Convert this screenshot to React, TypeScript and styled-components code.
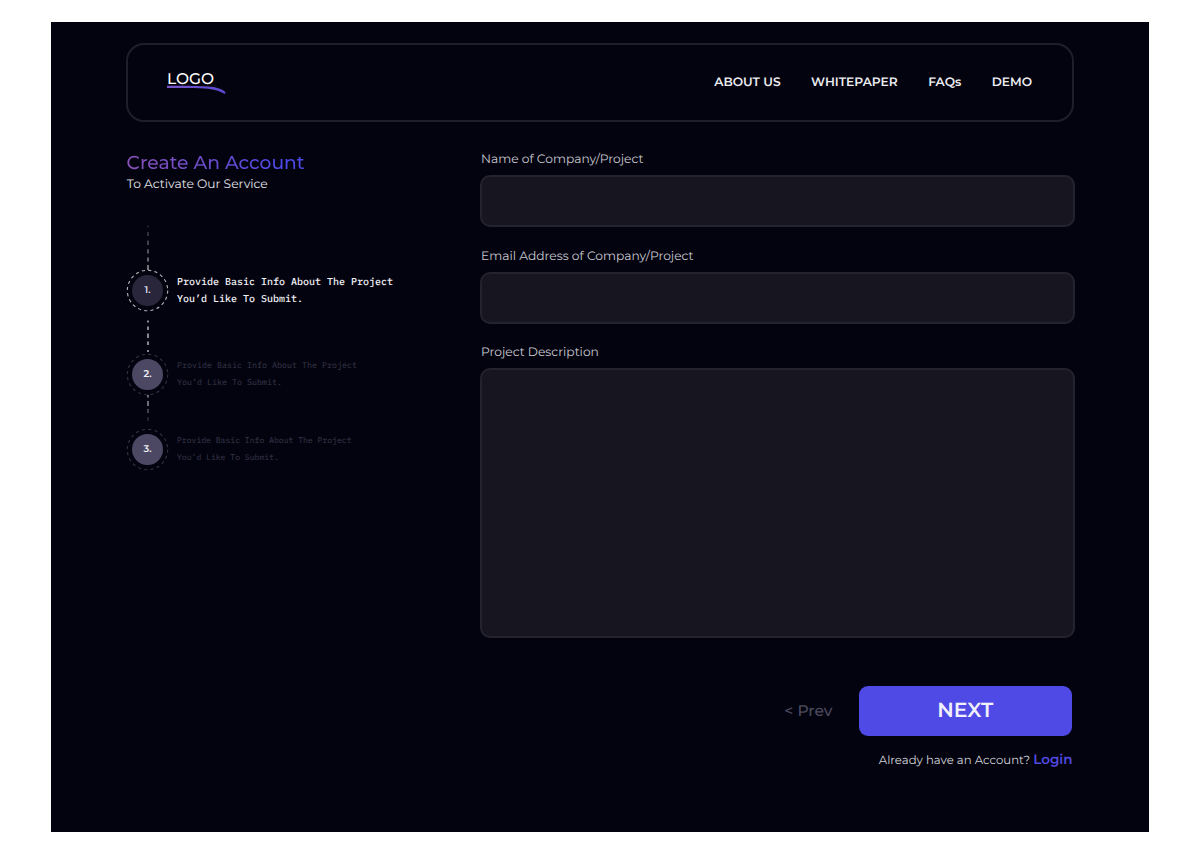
import React from "react";
import styled, { createGlobalStyle } from "styled-components";

const GlobalStyle = createGlobalStyle`
  *, *::before, *::after { box-sizing: border-box; }
  body {
    margin: 0;
    background: #ffffff;
    font-family: Montserrat, Inter, "Liberation Sans", sans-serif;
    text-rendering: geometricPrecision;
  }
`;

const Page = styled.div`
  height: 853px;
  padding: 22px 51px 21px;
`;

const Frame = styled.div`
  height: 810px;
  padding: 21px 74px 0 75px;
  background: #03030f;
`;

const Header = styled.header`
  display: flex;
  align-items: center;
  justify-content: space-between;
  width: 948px;
  height: 79px;
  padding: 0 40px 0 38.5px;
  border: 2px solid #1f1f2a;
  border-radius: 18px;
`;

const Logo = styled.a`
  display: flex;
  flex-direction: column;
  width: 60px;
  padding-bottom: 1px;
  color: #ffffff;
  font-size: 15.5px;
  font-weight: 500;
  line-height: 20px;
  white-space: nowrap;
`;

const LogoText = styled.span`
  padding-left: 0.5px;
`;

const Swoosh = styled.svg`
  display: block;
  width: 60px;
  height: 10px;
  margin-top: -3.5px;
`;

const Nav = styled.nav`
  display: flex;
  gap: 30.4px;
`;

const NavLink = styled.a`
  color: #ededf1;
  font-size: 12.25px;
  font-weight: 600;
  line-height: 20px;
  white-space: nowrap;
`;

const Main = styled.main`
  display: grid;
  grid-template-columns: 354px 595px;
  margin-top: 28px;
`;

const Title = styled.h1`
  width: max-content;
  margin: 0 0 0 0.6px;
  font-size: 18.7px;
  font-weight: 500;
  line-height: 25px;
  color: transparent;
  background: linear-gradient(90deg, #8650b4 0%, #6a4cc9 45%, #4e49e6 85%);
  background-clip: text;
  -webkit-background-clip: text;
`;

const Subtitle = styled.p`
  margin: 0;
  padding-left: 0.8px;
  color: #e4e4ea;
  font-size: 12.25px;
  line-height: 19px;
`;

const Steps = styled.div`
  display: flex;
  flex-direction: column;
  margin-top: 31px;
`;

const Connector = styled.svg<{ $height: number; $before?: number; $after?: number }>`
  display: block;
  width: 43px;
  height: ${(p) => p.$height}px;
  margin-top: ${(p) => p.$before ?? 0}px;
  margin-bottom: ${(p) => p.$after ?? 0}px;
`;

const Step = styled.div`
  display: flex;
  align-items: center;
  gap: 8px;
  height: 41px;
`;

const Marker = styled.div`
  display: grid;
  place-items: center;
  width: 43px;
  height: 43px;

  & > * {
    grid-area: 1 / 1;
  }
`;

const Ring = styled.svg`
  display: block;
  width: 43px;
  height: 43px;
`;

const Dot = styled.span<{ $active?: boolean }>`
  display: grid;
  place-items: center;
  width: 31px;
  height: 31px;
  border-radius: 50%;
  background: ${(p) => (p.$active ? "#29263b" : "#4c4863")};
  color: ${(p) => (p.$active ? "#dddde6" : "#eeeef4")};
  font-size: 9.8px;
  font-weight: 600;
  line-height: 12px;
`;

const StepText = styled.p<{ $active?: boolean; $size: number }>`
  margin: 0;
  padding-top: 1px;
  color: ${(p) => (p.$active ? "#f0f0f4" : "#3a384c")};
  font-family: "IBM Plex Mono", "DejaVu Sans Mono", monospace;
  font-size: ${(p) => p.$size}px;
  font-weight: ${(p) => (p.$active ? 500 : 400)};
  line-height: 16.6px;
  white-space: nowrap;
`;

const Form = styled.form`
  display: flex;
  flex-direction: column;
  gap: 19.7px;
`;

const Field = styled.div`
  display: flex;
  flex-direction: column;
  gap: 5px;
`;

const Label = styled.label`
  padding-left: 1px;
  color: #c9c9d0;
  font-size: 12.25px;
  line-height: 20px;
`;

const Input = styled.input`
  width: 100%;
  height: 52px;
  padding: 0 16px;
  border: 2px solid #23222e;
  border-radius: 10px;
  outline: none;
  background: #171620;
  color: #e4e4ea;
  font: inherit;
`;

const TextArea = styled.textarea`
  display: block;
  width: 100%;
  height: 269.6px;
  padding: 16px;
  border: 2px solid #23222e;
  border-radius: 10px;
  outline: none;
  resize: none;
  background: #171620;
  color: #e4e4ea;
  font: inherit;
`;

const Actions = styled.div`
  display: flex;
  align-items: center;
  justify-content: flex-end;
  gap: 26px;
  margin-top: 28.3px;
  padding-right: 3px;
`;

const PrevButton = styled.button`
  padding: 0;
  border: 0;
  background: none;
  color: #4c4a5e;
  font-family: inherit;
  font-size: 15.5px;
  font-weight: 500;
  line-height: 20px;
  text-rendering: inherit;
`;

const NextButton = styled.button`
  width: 213.5px;
  height: 50px;
  padding: 0;
  border: 0;
  border-radius: 9px;
  background: #4f49e6;
  color: #f1f0fd;
  font-family: inherit;
  font-size: 20.4px;
  font-weight: 600;
  text-rendering: inherit;
`;

const Account = styled.p`
  display: flex;
  justify-content: flex-end;
  gap: 3px;
  margin: -5.8px 0 0;
  padding-right: 2.5px;
  color: #d4d4da;
  font-size: 11.7px;
  line-height: 20px;
`;

const LoginLink = styled.a`
  color: #5149e0;
  font-size: 13.5px;
  font-weight: 600;
`;

const NAV = ["ABOUT US", "WHITEPAPER", "FAQs", "DEMO"];

function DashedRing({ active }: { active?: boolean }) {
  return (
    <Ring viewBox="0 0 43 43" fill="none">
      <circle
        cx="21.5"
        cy="21.5"
        r="20.2"
        stroke={active ? "#b4b4bc" : "#34323f"}
        strokeWidth="1.1"
        strokeDasharray="3.2 3.147"
      />
    </Ring>
  );
}

function StepItem({ number, size, active }: { number: number; size: number; active?: boolean }) {
  return (
    <Step>
      <Marker>
        <DashedRing active={active} />
        <Dot $active={active}>{number}.</Dot>
      </Marker>
      <StepText $active={active} $size={size}>
        Provide Basic Info About The Project
        <br />
        You’d Like To Submit.
      </StepText>
    </Step>
  );
}

export default function App() {
  return (
    <Page>
      <GlobalStyle />
      <Frame>
        <Header>
          <Logo>
            <LogoText>LOGO</LogoText>
            <Swoosh viewBox="0 0 60 10">
              <defs>
                <linearGradient id="swoosh" x1="0" x2="1" y1="0" y2="0">
                  <stop offset="0" stopColor="#7a55c8" />
                  <stop offset="1" stopColor="#5a48d0" />
                </linearGradient>
              </defs>
              <path
                d="M0 0.7 C18 0.5 34 0.7 44 1.7 C51 2.5 56 4.5 58.6 7.2 L57.8 9 C53 5.6 46 4 38 3.4 C27 2.8 14 3 0 3 Z"
                fill="url(#swoosh)"
              />
            </Swoosh>
          </Logo>
          <Nav>
            {NAV.map((label) => (
              <NavLink key={label}>{label}</NavLink>
            ))}
          </Nav>
        </Header>

        <Main>
          <section>
            <Title>Create An Account</Title>
            <Subtitle>To Activate Our Service</Subtitle>
            <Steps>
              <Connector $height={45} viewBox="0 0 43 45">
                <defs>
                  <linearGradient id="fadeIn" gradientUnits="userSpaceOnUse" x1="0" y1="0" x2="0" y2="45">
                    <stop offset="0" stopColor="#a8a8b0" stopOpacity="0.25" />
                    <stop offset="1" stopColor="#b8b8c0" />
                  </linearGradient>
                </defs>
                <path d="M22 0.5V2.5M22 7V11M22 15.5V20M22 24.3V28.5M22 32.5V36.5M22 40V45" stroke="url(#fadeIn)" strokeWidth="1.3" />
              </Connector>
              <StepItem number={1} size={10} active />
              <Connector $height={33} $before={9} $after={1} viewBox="0 0 43 33">
                <path d="M22 0.5V2.5M22 6.5V10M22 13.5V18M22 21.5V25M22 30V32" stroke="#b4b4bc" strokeWidth="1.5" />
              </Connector>
              <StepItem number={2} size={8.34} />
              <Connector $height={26} $after={8} viewBox="0 0 43 26">
                <path d="M22 0V2.5M22 6V11" stroke="#a4a4ac" strokeWidth="1.3" />
                <path d="M22 14V18" stroke="#62626c" strokeWidth="1.3" />
                <path d="M22 22V26" stroke="#34343e" strokeWidth="1.2" />
              </Connector>
              <StepItem number={3} size={8.08} />
            </Steps>
          </section>

          <Form>
            <Field>
              <Label htmlFor="name">Name of Company/Project</Label>
              <Input id="name" />
            </Field>
            <Field>
              <Label htmlFor="email">Email Address of Company/Project</Label>
              <Input id="email" />
            </Field>
            <Field>
              <Label htmlFor="description">Project Description</Label>
              <TextArea id="description" />
            </Field>
            <Actions>
              <PrevButton type="button">&lt; Prev</PrevButton>
              <NextButton type="button">NEXT</NextButton>
            </Actions>
            <Account>
              <span>Already have an Account?</span>
              <LoginLink>Login</LoginLink>
            </Account>
          </Form>
        </Main>
      </Frame>
    </Page>
  );
}
